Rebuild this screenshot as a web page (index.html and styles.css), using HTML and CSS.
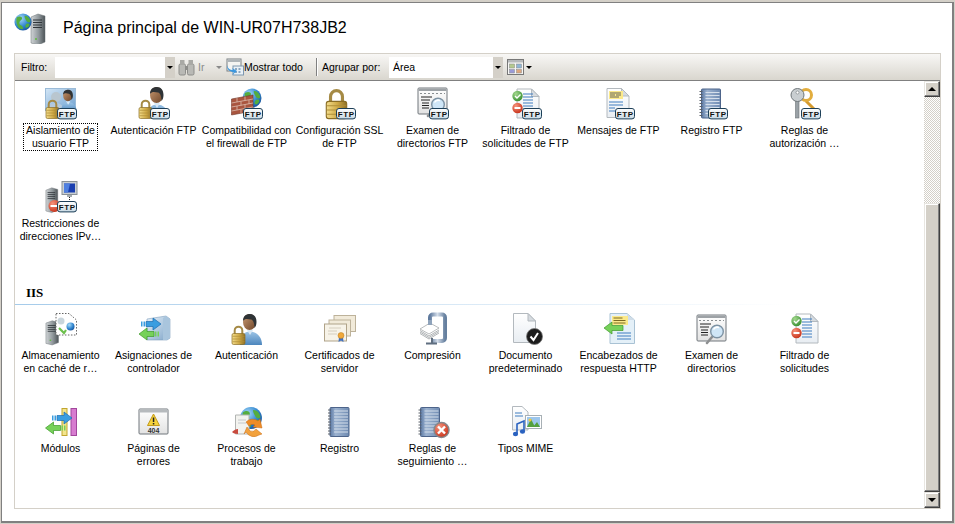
FILE: index.html
```html
<!DOCTYPE html>
<html lang="es">
<head>
<meta charset="utf-8">
<title>Página principal de WIN-UR07H738JB2</title>
<link rel="stylesheet" href="styles.css">
</head>
<body>
<svg class="defs" aria-hidden="true">
<defs>
<linearGradient id="gGold" x1="0" x2="1" y1="0" y2="0"><stop offset="0" stop-color="#f3dd8c"/><stop offset=".55" stop-color="#cfa945"/><stop offset="1" stop-color="#8f7026"/></linearGradient>
<linearGradient id="gBlue" x1="0" x2="0" y1="0" y2="1"><stop offset="0" stop-color="#9cc4e6"/><stop offset="1" stop-color="#4c86bd"/></linearGradient>
<linearGradient id="gPic" x1="0" x2="1" y1="0" y2="1"><stop offset="0" stop-color="#d3e6f6"/><stop offset="1" stop-color="#6d9fcf"/></linearGradient>
<linearGradient id="gSkin" x1="0" x2="1" y1="0" y2="1"><stop offset="0" stop-color="#c99a72"/><stop offset="1" stop-color="#6d4428"/></linearGradient>
<linearGradient id="gBadge" x1="0" x2="0" y1="0" y2="1"><stop offset="0" stop-color="#fff"/><stop offset="1" stop-color="#c8d9e4"/></linearGradient>
<linearGradient id="gDoc" x1="0" x2="0" y1="0" y2="1"><stop offset="0" stop-color="#fff"/><stop offset="1" stop-color="#e8edf2"/></linearGradient>
<linearGradient id="gSrv" x1="0" x2="1" y1="0" y2="0"><stop offset="0" stop-color="#cfd3d5"/><stop offset=".55" stop-color="#8f979b"/><stop offset="1" stop-color="#4d5458"/></linearGradient>
<linearGradient id="gBook" x1="0" x2="1" y1="0" y2="0"><stop offset="0" stop-color="#5d7aa5"/><stop offset=".3" stop-color="#9db3d0"/><stop offset="1" stop-color="#6f8bb2"/></linearGradient>
<linearGradient id="gCube" x1="0" x2="1" y1="0" y2="1"><stop offset="0" stop-color="#e8f2fa"/><stop offset="1" stop-color="#7ea4c8"/></linearGradient>
<linearGradient id="gWin" x1="0" x2="0" y1="0" y2="1"><stop offset="0" stop-color="#fff"/><stop offset="1" stop-color="#e2e2e2"/></linearGradient>
<linearGradient id="gClamp" x1="0" x2="1" y1="0" y2="0"><stop offset="0" stop-color="#5f7a9e"/><stop offset=".5" stop-color="#d5deea"/><stop offset="1" stop-color="#66809f"/></linearGradient>
<radialGradient id="gGlobe" cx=".35" cy=".3" r=".8"><stop offset="0" stop-color="#a8dcf8"/><stop offset=".6" stop-color="#2f84cf"/><stop offset="1" stop-color="#174e94"/></radialGradient>
<radialGradient id="gRed" cx=".35" cy=".3" r=".8"><stop offset="0" stop-color="#f6937c"/><stop offset="1" stop-color="#c42b12"/></radialGradient>
<radialGradient id="gGreen" cx=".35" cy=".3" r=".8"><stop offset="0" stop-color="#a5d88f"/><stop offset="1" stop-color="#2f8a2b"/></radialGradient>

<g id="badge"><rect x="12.5" y="20.5" width="19" height="10.4" rx="2.5" fill="url(#gBadge)" stroke="#1d3f58"/><text x="22.200" y="28.800" class="badge-text">FTP</text></g>

<g id="lk"><path d="M3.2 9V5.5a3.8 3.8 0 0 1 7.6 0V9" fill="none" stroke="#a58a45" stroke-width="2"/><rect x=".5" y="8.5" width="13" height="11" rx="1.5" fill="url(#gGold)" stroke="#8a6d25" stroke-width=".7"/><path d="M1 11.3h12M1 14h12M1 16.7h12" stroke="#b08e38" stroke-width=".7"/></g>

<g id="person"><path d="M9 32C9 23 13 18.500 19 18.500S31 23 31 32Z" fill="url(#gBlue)"/><path d="M16 17h6l-3 5z" fill="#d8e8f5"/><ellipse cx="18.500" cy="9" rx="6.500" ry="8" fill="url(#gSkin)"/><path d="M12 8C12 2 16 1 19 1c4 0 6.500 3 6.500 8 0 3-1 5-2 6 0-4-1-8-3.500-8.500C17 6 14 5 12 8Z" fill="#2f3336"/></g>

<g id="globe"><circle cx="10" cy="10" r="9.500" fill="url(#gGlobe)"/><path d="M3 5c3-2 6-1 6 1S6 8 6 11s3 2 4 5-3 2-5 0-3-8-2-11ZM12 3c3 0 5 2 6 5s-3 3-4 1-3-5-2-6ZM14 12c2-1 4 0 3 2s-3 3-4 2 0-3 1-4Z" fill="#54ad3f"/></g>

<g id="server"><path d="M1 4 8 1 15 3V29L8 32 1 30Z" fill="url(#gSrv)" stroke="#6b7275" stroke-width=".5"/><path d="M3 7h9M3 9.500h9M3 12h9M3 14.500h9" stroke="#30363a" stroke-width="1"/><circle cx="6" cy="26" r="1" fill="#5ebd3e"/></g>

<g id="doc"><path d="M.5.5H15L22.500 8V29.500H.5Z" fill="url(#gDoc)" stroke="#b3b9be"/><path d="M15 .5V8H22.500Z" fill="#d6dbe0" stroke="#b3b9be"/></g>

<g id="book"><rect x="2" y=".5" width="19" height="29" rx="1" fill="url(#gBook)" stroke="#4d648a"/><path d="M6 4H20M6 7H20M6 10H20M6 13H20M6 16H20M6 19H20M6 22H20M6 25H20" stroke="#d5dfeb" stroke-width="1"/><path d="M0 3h3M0 6h3M0 9h3M0 12h3M0 15h3M0 18h3M0 21h3M0 24h3M0 27h3" stroke="#5a6068" stroke-width="1"/></g>

<g id="winMag"><rect x="1" y="2" width="29" height="26" rx="1" fill="url(#gWin)" stroke="#70777c"/><rect x="1.500" y="2.500" width="28" height="2.500" fill="#9da2a6"/><path d="M3 7.500h25" stroke="#8a8f92" stroke-dasharray="2 2"/><path d="M4 11h11M4 14h9M5 17h7M5 19.500h7M5 22h7" stroke="#222" stroke-width="1"/><path d="M16 24 11 30" stroke="#8d8f91" stroke-width="2.500" stroke-linecap="round"/><circle cx="21" cy="18.500" r="6.300" fill="#cfe6f7" stroke="#7d92a3" stroke-width="1.400"/><path d="M17.500 16.500a4.500 4.500 0 0 1 5.500-2" stroke="#fff" fill="none" stroke-width="1.500"/></g>

<g id="filterDoc"><use href="#doc" transform="translate(6.500 .5)"/><path d="M13 6h10M13 9h10M13 12h10M13 15h10M13 18h10M13 21h10M13 24h10" stroke="#3f7cc0" stroke-width="1"/><circle cx="7.500" cy="8" r="5.200" fill="url(#gGreen)"/><path d="m5 8 2 2 3.500-3.500" stroke="#fff" fill="none" stroke-width="1.400"/><circle cx="7.500" cy="20" r="5.200" fill="url(#gRed)"/><rect x="4.500" y="19" width="6" height="2" fill="#fff"/></g>

<g id="arB"><path d="M5-2.500H12V-6L20 0 12 6V2.500H5Z" fill="#3a9de0" stroke="#1b6cb0" stroke-width=".7"/><path d="M0-2.500h1.500v5H0ZM2.500-2.500h1.500v5H2.500Z" fill="#3a9de0"/></g>
<g id="arG"><path d="M15-2.500H8V-6L0 0 8 6V2.500H15Z" fill="#76d15a" stroke="#3d9a2a" stroke-width=".7"/><path d="M16-2.500h1.500v5H16ZM18.500-2.500h1.500v5H18.500Z" fill="#76d15a"/></g>
</defs>
</svg>

<div class="window">
  <header class="header">
    <svg class="page-icon" viewBox="0 0 32 32"><use href="#server" transform="translate(16 1)"/><use href="#globe" transform="translate(0 1) scale(.9)"/></svg>
    <h1 class="title">Página principal de WIN-UR07H738JB2</h1>
  </header>

  <section class="panel">
    <div class="toolbar">
      <span class="tb-label tb-filter">Filtro:</span>
      <div class="combo combo-filter"><span class="combo-value"></span><span class="combo-btn"><i class="caret"></i></span></div>
      <svg class="tb-bino" viewBox="0 0 17 17"><rect x="1" y="5" width="6.500" height="11" rx="1.500" fill="#b9b9b5" stroke="#8d8d8a"/><rect x="9.500" y="5" width="6.500" height="11" rx="1.500" fill="#b9b9b5" stroke="#8d8d8a"/><rect x="2" y="1" width="4.500" height="5" fill="#a9a9a5"/><rect x="10.500" y="1" width="4.500" height="5" fill="#a9a9a5"/><rect x="7" y="7" width="3" height="4" fill="#8d8d8a"/></svg>
      <span class="tb-label tb-go">Ir</span>
      <i class="caret caret-muted"></i>
      <svg class="tb-show" viewBox="0 0 18 18"><rect x="1" y="1" width="14" height="12" fill="#f4f4f2" stroke="#7a8084"/><rect x="1.500" y="1.500" width="13" height="2.500" fill="#aeb4b8"/><rect x="7" y="8" width="10.500" height="9" fill="#e9f0f6" stroke="#7e98b0"/><path d="M9 11h2M12.500 11h2M9 14h2M12.500 14h2" stroke="#2f5f8c"/><path d="M1 7c0 5 3 7 7 7l-2 3 5-4-5-3 1 2C4 12 2 11 1 7Z" fill="#3b97de"/></svg>
      <span class="tb-label tb-showall">Mostrar todo</span>
      <span class="tb-sep"></span>
      <span class="tb-label tb-group">Agrupar por:</span>
      <div class="combo combo-group"><span class="combo-value">Área</span><span class="combo-btn"><i class="caret"></i></span></div>
      <svg class="tb-view" viewBox="0 0 17 16"><rect x=".5" y=".5" width="16" height="15" fill="#f7f7f5" stroke="#777"/><rect x="1" y="1" width="15" height="2.500" fill="#b5b8ba"/><rect x="2.500" y="5" width="5" height="4" fill="#b4c98e" stroke="#888" stroke-width=".5"/><rect x="9.500" y="5" width="5" height="4" fill="#8fb6d6" stroke="#888" stroke-width=".5"/><rect x="2.500" y="10.500" width="5" height="3.500" fill="#9a9ad8" stroke="#888" stroke-width=".5"/><rect x="9.500" y="10.500" width="5" height="3.500" fill="#dfa67e" stroke="#888" stroke-width=".5"/></svg>
      <i class="caret caret-view"></i>
    </div>

    <div class="body">
      <div class="list">
        <div class="grid">
          <div class="item">
            <svg class="icon" viewBox="0 0 32 32"><rect x=".5" y=".5" width="30" height="22" fill="url(#gPic)" stroke="#9bbbd8"/><circle cx="11" cy="9" r="5" fill="#b9c6cf"/><path d="M3 23c0-6 4-8 8-8s7 2 8 8Z" fill="#b5c9da"/><use href="#person" transform="translate(9.500 1) scale(.72)"/><use href="#lk" transform="translate(.5 11)"/><use href="#badge"/></svg>
            <div class="label focused">Aislamiento de<br>usuario FTP</div>
          </div>
          <div class="item">
            <svg class="icon" viewBox="0 0 32 32"><use href="#person" transform="translate(0 -2)"/><use href="#lk" transform="translate(.5 11)"/><use href="#badge"/></svg>
            <div class="label">Autenticación FTP</div>
          </div>
          <div class="item">
            <svg class="icon" viewBox="0 0 32 32"><use href="#globe" transform="translate(11 0)"/><path d="M.5 11 22 7V23L.5 27Z" fill="#a9553f" stroke="#6f3526" stroke-width=".6"/><path d="M.5 15 22 11M.5 19 22 15M.5 23 22 19M6 10V14M14 8.500V12.500M10 13.500V17.500M18 12V16M6 18V22M14 16.500V20.500M10 21.500V25.500M18 20V24" stroke="#dcbcae" stroke-width=".8"/><use href="#badge"/></svg>
            <div class="label">Compatibilidad con<br>el firewall de FTP</div>
          </div>
          <div class="item">
            <svg class="icon" viewBox="0 0 32 32"><use href="#lk" transform="translate(1.500 0) scale(1.570)"/><use href="#badge"/></svg>
            <div class="label">Configuración SSL<br>de FTP</div>
          </div>
          <div class="item">
            <svg class="icon" viewBox="0 0 32 32"><use href="#winMag" transform="translate(0 -2)"/><use href="#badge"/></svg>
            <div class="label">Examen de<br>directorios FTP</div>
          </div>
          <div class="item">
            <svg class="icon" viewBox="0 0 32 32"><use href="#filterDoc"/><use href="#badge"/></svg>
            <div class="label">Filtrado de<br>solicitudes de FTP</div>
          </div>
          <div class="item">
            <svg class="icon" viewBox="0 0 32 32"><use href="#doc" transform="translate(3.500 0)"/><rect x="6" y="3" width="14" height="8" fill="#fbe98a"/><path d="M7 5h11M7 7h5M13 7h5M7 9h9" stroke="#555" stroke-width=".9"/><path d="M6 14h14M6 17h14M6 20h6M6 23h6" stroke="#3f7cc0"/><use href="#badge"/></svg>
            <div class="label">Mensajes de FTP</div>
          </div>
          <div class="item">
            <svg class="icon" viewBox="0 0 32 32"><use href="#book" transform="translate(3.500 .5)"/><use href="#badge"/></svg>
            <div class="label">Registro FTP</div>
          </div>
          <div class="item">
            <svg class="icon" viewBox="0 0 32 32"><path d="M17 13 25 21" stroke="#d49a2e" stroke-width="3"/><circle cx="17" cy="7" r="5.500" fill="none" stroke="#e2ad3e" stroke-width="3"/><rect x="6.500" y="9" width="3.500" height="21" fill="#9aa1a6" stroke="#6c7377" stroke-width=".6"/><circle cx="8.500" cy="7" r="6.500" fill="#c9ced1" stroke="#70777b"/><circle cx="8.500" cy="4.500" r="1.500" fill="#fff" stroke="#70777b" stroke-width=".6"/><use href="#badge"/></svg>
            <div class="label">Reglas de<br>autorización …</div>
          </div>
          <div class="item">
            <svg class="icon" viewBox="0 0 32 32"><use href="#server" transform="translate(0 6) scale(.85 .8)"/><rect x="17" y=".5" width="15" height="13" fill="#c9cfd3" stroke="#8a9196"/><rect x="19" y="2.500" width="11" height="9" fill="#1a3fb0"/><path d="M19 2.500h6l-2 9h-4Z" fill="#4f80e0"/><rect x="22" y="14" width="5" height="2" fill="#a4abae"/><path d="M24.500 16V21" stroke="#222" stroke-dasharray="1 1"/><circle cx="9.500" cy="25" r="6" fill="url(#gRed)"/><rect x="5.500" y="24" width="8" height="2" fill="#fff"/><use href="#badge"/></svg>
            <div class="label">Restricciones de<br>direcciones IPv…</div>
          </div>
        </div>

        <div class="group-head"><span class="group-title">IIS</span></div>

        <div class="grid">
          <div class="item">
            <svg class="icon" viewBox="0 0 32 32"><use href="#server" transform="translate(0 7) scale(.9 .78)"/><path d="M11 .5H24L31.500 7V22H11Z" fill="#fff" stroke="#666" stroke-dasharray="1.500 1.500"/><circle cx="16" cy="8" r="3.500" fill="#c9d5dc"/><circle cx="25.500" cy="13.500" r="4" fill="url(#gGlobe)"/><path d="M14 15 19 20 21 17" fill="none" stroke="#6cc04c" stroke-width="2.200"/></svg>
            <div class="label">Almacenamiento<br>en caché de r…</div>
          </div>
          <div class="item">
            <svg class="icon" viewBox="0 0 32 32"><path d="M9 6 28 3 32 6V25L29 27 9 27Z" fill="url(#gCube)" stroke="#7f9fbd" stroke-width=".6"/><path d="M25 5 28 3 32 6V25L29 27 25 27Z" fill="#a9c5dd"/><use href="#arB" transform="translate(3 11)"/><use href="#arG" transform="translate(1 21)"/></svg>
            <div class="label">Asignaciones de<br>controlador</div>
          </div>
          <div class="item">
            <svg class="icon" viewBox="0 0 32 32"><use href="#person"/><use href="#lk" transform="translate(.5 12)"/></svg>
            <div class="label">Autenticación</div>
          </div>
          <div class="item">
            <svg class="icon" viewBox="0 0 32 32"><rect x="10" y="2.500" width="21.500" height="16" fill="#f1ead9" stroke="#bdb29a"/><rect x="5" y="7" width="21.500" height="16" fill="#f1ead9" stroke="#bdb29a"/><rect x=".5" y="11" width="22" height="17" fill="#f7f3e8" stroke="#b0a389"/><path d="M5 15h12M4 18h9M4 21h9" stroke="#d5cebe"/><path d="M15 24 14.500 29 17 27.500 19.500 29 19 24Z" fill="#3f6fc0"/><circle cx="17" cy="22.500" r="3" fill="#f0a83a" stroke="#b97a1b" stroke-width=".5"/></svg>
            <div class="label">Certificados de<br>servidor</div>
          </div>
          <div class="item">
            <svg class="icon" viewBox="0 0 32 32"><path d="M13 10V4.500A3 3 0 0 1 16 1.500H25A3 3 0 0 1 28 4.500V25A3 3 0 0 1 25 28H14" fill="none" stroke="url(#gClamp)" stroke-width="4"/><path d="M3 16 13 10 22 15 12 21Z" fill="#fff" stroke="#8a8f92" stroke-width=".6"/><path d="M3 17.500 12 23 22 17M3 19 12 24.500 22 18.500M3 20.500 12 26 22 20" fill="none" stroke="#9a9fa2" stroke-width=".8"/><rect x="11" y="7" width="4" height="5" fill="#8fa3bb"/><path d="M15 25V30M9 30.500H20" stroke="#5f6e80" stroke-width="2"/></svg>
            <div class="label">Compresión</div>
          </div>
          <div class="item">
            <svg class="icon" viewBox="0 0 32 32"><use href="#doc" transform="translate(3 0)"/><circle cx="24.500" cy="23.500" r="8" fill="#1c1c1c" stroke="#777" stroke-width=".8"/><path d="m20.500 23.500 3 3.500 4.500-7" fill="none" stroke="#fff" stroke-width="2"/></svg>
            <div class="label">Documento<br>predeterminado</div>
          </div>
          <div class="item">
            <svg class="icon" viewBox="0 0 32 32"><path d="M7 .5H24L31.500 7V30.500H7Z" fill="#e4f0f8" stroke="#a9c2d4"/><path d="M24 .5V7H31.500Z" fill="#d0dde8"/><rect x="9" y="3" width="16" height="9" fill="#fbe98a"/><path d="M10.500 5h9M10.500 7.500h12M10.500 10h12" stroke="#7c6a22"/><path d="M14 20h14M14 23h14M14 26h14" stroke="#3f7cc0"/><path d="M1 15 9 9V12.500H20V17.500H9V21Z" fill="#76d15a" stroke="#3d9a2a" stroke-width=".7"/></svg>
            <div class="label">Encabezados de<br>respuesta HTTP</div>
          </div>
          <div class="item">
            <svg class="icon" viewBox="0 0 32 32"><use href="#winMag"/></svg>
            <div class="label">Examen de<br>directorios</div>
          </div>
          <div class="item">
            <svg class="icon" viewBox="0 0 32 32"><use href="#filterDoc"/></svg>
            <div class="label">Filtrado de<br>solicitudes</div>
          </div>
          <div class="item">
            <svg class="icon" viewBox="0 0 32 32"><rect x="17" y="2.500" width="5" height="27" fill="#f3e58d" stroke="#c1a52e"/><rect x="26" y="2.500" width="5.500" height="27" fill="#d77cd0" stroke="#a2479c"/><use href="#arB" transform="translate(7 12)"/><use href="#arG" transform="translate(.5 22)"/></svg>
            <div class="label">Módulos</div>
          </div>
          <div class="item">
            <svg class="icon" viewBox="0 0 32 32"><rect x="1" y="3" width="29" height="25" rx="1" fill="url(#gWin)" stroke="#70777c"/><rect x="1.500" y="3.500" width="28" height="3" fill="#b6babd"/><path d="M15.500 8 21.500 19.500H9.500Z" fill="#f6d33c" stroke="#c39a1c"/><rect x="14.800" y="11.500" width="1.500" height="4.500" fill="#222"/><rect x="14.800" y="17" width="1.500" height="1.500" fill="#222"/><text x="15.500" y="26.500" class="err-text">404</text></svg>
            <div class="label">Páginas de<br>errores</div>
          </div>
          <div class="item">
            <svg class="icon" viewBox="0 0 32 32"><use href="#globe" transform="translate(8.500 .5) scale(1.150)"/><path d="M4.500 9H18V28H4.500Z" fill="#f3f3ef" stroke="#b2b5b3"/><path d="M7 14h8M7 17h8" stroke="#c4c8cb"/><path d="M1 26c2-2 4-3 6-3v5c-3 0-5-1-6-2Z" fill="#c84a3e"/><path d="M15 16a9 9 0 0 1 12-1l2-2 2 9-9-1 2-2a5 5 0 0 0-6 1Z" fill="#ef8c26" stroke="#c96a12" stroke-width=".5"/><path d="M16 21 13 28 15 26a9 9 0 0 0 13 3l3-1-6-5a5 5 0 0 1-6 2Z" fill="#f2a13c" stroke="#c96a12" stroke-width=".5"/></svg>
            <div class="label">Procesos de<br>trabajo</div>
          </div>
          <div class="item">
            <svg class="icon" viewBox="0 0 32 32"><use href="#book" transform="translate(4 1)"/></svg>
            <div class="label">Registro</div>
          </div>
          <div class="item">
            <svg class="icon" viewBox="0 0 32 32"><use href="#book" transform="translate(1.500 1)"/><circle cx="24.500" cy="24" r="7.500" fill="url(#gRed)" stroke="#85888c" stroke-width="1.500"/><path d="m21 20.500 7 7m0-7-7 7" stroke="#fff" stroke-width="2.400"/></svg>
            <div class="label">Reglas de<br>seguimiento …</div>
          </div>
          <div class="item">
            <svg class="icon" viewBox="0 0 32 32"><path d="M2.500.5H12L18 6V24H2.500Z" fill="url(#gDoc)" stroke="#b3b9be"/><path d="M5 7h7M5 10h8" stroke="#3f7cc0"/><rect x="15.500" y="9.500" width="16" height="13" fill="#fff" stroke="#a8b0b5"/><rect x="17" y="11" width="13" height="10" fill="#9cc6ec"/><path d="M17 21 21 13 25 21ZM23 21 27 16 30 21Z" fill="#54a03e"/><circle cx="20" cy="14" r="1.500" fill="#f2c83a"/><path d="M7 28V18L14 15V25" fill="none" stroke="#2a62c0" stroke-width="1.600"/><ellipse cx="5.500" cy="28" rx="2.600" ry="2.200" fill="#2a62c0"/><ellipse cx="12.500" cy="25.500" rx="2.600" ry="2.200" fill="#2a62c0"/></svg>
            <div class="label">Tipos MIME</div>
          </div>
        </div>
      </div>

      <div class="scrollbar">
        <div class="sb-btn"><i class="arrow-up"></i></div>
        <div class="sb-track"></div>
        <div class="sb-thumb"></div>
        <div class="sb-btn"><i class="caret"></i></div>
      </div>
    </div>
  </section>
</div>
</body>
</html>
```

FILE: styles.css
```css
* { box-sizing: border-box; }

html, body { margin: 0; padding: 0; }

body {
  width: 955px;
  height: 524px;
  overflow: hidden;
  background: #d4d0c8;
  font-family: "Liberation Sans", Arial, sans-serif;
  font-size: 10.5px;
  color: #000;
}

.defs { position: absolute; width: 0; height: 0; }

.badge-text {
  font: bold 8px "Liberation Sans", Arial, sans-serif;
  letter-spacing: .6px;
  text-anchor: middle;
  fill: #111;
}

.err-text {
  font: bold 7px "Liberation Sans", Arial, sans-serif;
  text-anchor: middle;
  fill: #333;
}

.window {
  display: flex;
  flex-direction: column;
  width: 953px;
  height: 521px;
  margin: 2px 0 0 1px;
  background: #fff;
  border: 1px solid #808080;
  border-right-width: 2px;
  border-bottom-width: 2px;
}

.header {
  display: flex;
  align-items: center;
  gap: 17px;
  height: 50px;
  padding-left: 12px;
  flex: none;
}

.page-icon { width: 32px; height: 32px; flex: none; }

.title {
  margin: 0;
  font-size: 16px;
  font-weight: 400;
  white-space: nowrap;
}

.panel {
  display: flex;
  flex-direction: column;
  flex: 1;
  min-height: 0;
  margin: 0 11px 12px 12px;
  border: 1px solid #d4d0c8;
}

.toolbar {
  display: flex;
  align-items: center;
  flex: none;
  height: 27px;
  background: linear-gradient(#f8f7f5, #d9d6ce);
  border-bottom: 1px solid #808080;
  white-space: nowrap;
}

.tb-label { flex: none; }
.tb-filter { margin-left: 6px; width: 34px; }
.tb-go { margin-left: 3px; color: #8a8a8a; width: 8px; }
.tb-group { margin-left: 4px; width: 67px; }
.tb-showall { width: 63px; }

.combo {
  display: flex;
  flex: none;
  height: 21px;
  background: #fff;
}

.combo-filter { width: 120px; }
.combo-group { width: 114px; }

.combo-value {
  flex: 1;
  padding-left: 4px;
  line-height: 21px;
}

.combo-btn {
  display: flex;
  align-items: center;
  justify-content: center;
  width: 10px;
  background: #d4d0c8;
}

.caret {
  display: block;
  width: 0;
  height: 0;
  border-left: 3px solid transparent;
  border-right: 3px solid transparent;
  border-top: 3px solid #000;
}

.caret-muted { margin-left: 10px; border-top-color: #8a8a8a; }
.caret-view { margin-left: 2px; }

.tb-bino { width: 17px; height: 17px; margin-left: 3px; flex: none; }
.tb-show { width: 18px; height: 18px; margin-left: 4px; flex: none; }
.tb-view { width: 17px; height: 16px; margin-left: 4px; flex: none; }

.tb-sep {
  flex: none;
  width: 2px;
  height: 18px;
  margin-left: 9px;
  background: #808080;
  border-right: 1px solid #fff;
}

.body {
  display: flex;
  flex: 1;
  min-height: 0;
}

.list {
  flex: 1;
  min-width: 0;
  overflow: hidden;
  background: #fff;
}

.grid {
  display: grid;
  grid-template-columns: repeat(9, 93px);
  grid-auto-rows: 93px;
  margin-left: -1px;
}

.item {
  display: flex;
  flex-direction: column;
  align-items: center;
  padding-top: 7px;
}

.icon {
  display: block;
  width: 32px;
  height: 32px;
  flex: none;
  overflow: visible;
}

.label {
  margin-top: 4px;
  line-height: 13px;
  text-align: center;
  white-space: nowrap;
}

.label.focused {
  margin-top: 3px;
  padding: 0 2px;
  border: 1px dotted #000;
}

.group-head {
  height: 38px;
  padding: 19px 0 0 11px;
  border-bottom: 1px solid;
  border-image: linear-gradient(90deg, #a5cbea, #fff 85%) 1;
  margin: 0 0 1px;
}

.group-title {
  display: block;
  font-family: "Liberation Serif", "Times New Roman", serif;
  font-weight: bold;
  font-size: 13px;
  line-height: 13px;
}

.scrollbar {
  display: flex;
  flex-direction: column;
  flex: none;
  width: 16px;
}

.sb-btn,
.sb-thumb {
  background: #d4d0c8;
  border: 1px solid;
  border-color: #e8e6e1 #404040 #404040 #e8e6e1;
  box-shadow: inset -1px -1px 0 #808080, inset 1px 1px 0 #fff;
}

.sb-btn {
  display: flex;
  align-items: center;
  justify-content: center;
  flex: none;
  height: 16px;
}

.arrow-up {
  display: block;
  width: 0;
  height: 0;
  border-left: 4px solid transparent;
  border-right: 4px solid transparent;
  border-bottom: 4px solid #000;
}

.sb-btn .caret {
  border-left-width: 4px;
  border-right-width: 4px;
  border-top-width: 4px;
}

.sb-track {
  flex: none;
  height: 106px;
  background: repeating-conic-gradient(#d4d0c8 0 25%, #fff 0 50%) 0 0 / 2px 2px;
}

.sb-thumb { flex: 1; }
```
